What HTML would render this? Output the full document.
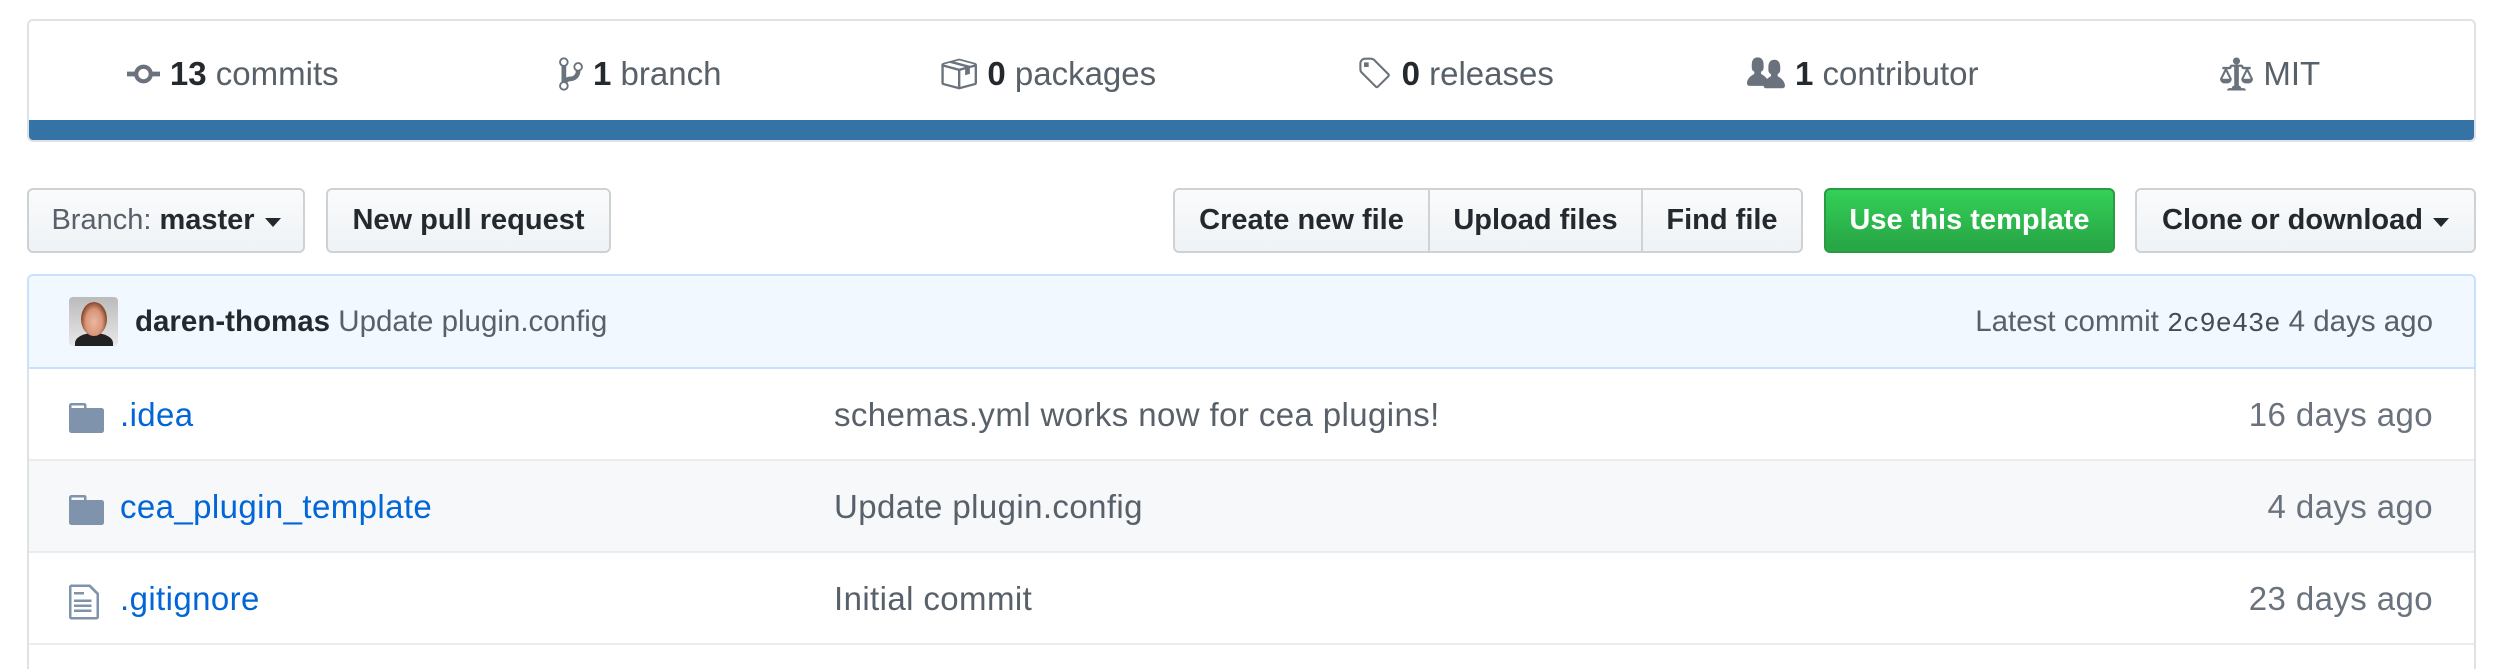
<!DOCTYPE html>
<html><head><meta charset="utf-8"><style>
*{box-sizing:border-box;margin:0;padding:0}
body{width:2493px;height:658px;background:#fff;font-family:"Liberation Sans",Arial,sans-serif;overflow:hidden;position:relative;color:#24292e}
.stats{position:absolute;left:27px;top:19px;width:2449px;height:123px;border:2px solid #dfe2e5;border-radius:6px;overflow:hidden}
.cols{display:flex;height:101px}
.col{flex:1;display:flex;align-items:center;justify-content:center;font-size:33px;color:#586069;gap:10px;padding-top:4px}
.col b{color:#24292e}
.col svg{fill:#6a737d}
.bar{position:absolute;left:0;right:0;bottom:0;height:20px;background:#3572a5}
.btn{position:absolute;top:188px;height:65px;border:2px solid #cfd2d5;border-radius:6px;background:linear-gradient(#fafbfc,#eff3f6 90%);font-size:29px;font-weight:bold;display:flex;align-items:center;justify-content:center;color:#24292e}
.caret{display:inline-block;width:0;height:0;border-left:8px solid transparent;border-right:8px solid transparent;border-top:9px solid #24292e;margin-left:10px;margin-top:3px}
.green{background:linear-gradient(#34d058,#28a745 90%);border-color:#2a9a44;color:#fff}
.tease{position:absolute;left:27px;top:274px;width:2449px;height:95px;background:#f1f8ff;border:2px solid #c8e1ff;border-radius:6px 6px 0 0;font-size:29.5px;color:#586069}
.av{position:absolute;left:40px;top:21px;width:49px;height:49px;border-radius:4px;overflow:hidden;background:linear-gradient(#bbb,#e8e8e8)}
.av i{position:absolute;left:12px;top:5px;width:26px;height:34px;border-radius:50%;background:radial-gradient(ellipse at 50% 60%,#eab7a0 0,#d8967a 45%,#8a4a2e 70%)}
.av s{position:absolute;left:6px;top:36px;width:38px;height:20px;border-radius:50% 50% 0 0;background:#222}
.tl{position:absolute;left:106px;top:29px}
.tl b{color:#24292e}
.tr{position:absolute;right:41px;top:29px}
.mono{font-family:"Liberation Mono",monospace;font-size:27px;color:#444d56}
.rows{position:absolute;left:27px;top:369px;width:2449px;height:300px;border-left:2px solid #dfe2e5;border-right:2px solid #dfe2e5}
.row{position:relative;height:92px;border-bottom:2px solid #eaecef;font-size:33px;letter-spacing:0.4px}
.row.alt{background:#f6f8fa}
.row svg{position:absolute;left:40px;top:29px;fill:#7f93ad}
.name{position:absolute;left:91px;top:27px;color:#0366d6}
.msg{position:absolute;left:805px;top:27px;color:#586069}
.age{position:absolute;right:41px;top:27px;color:#6a737d}
</style></head><body>
<div class="stats"><div class="cols">
<div class="col"><svg width="33" height="38" viewBox="0 0 14 16"><path d="M10.86 7c-.45-1.72-2-3-3.86-3-1.86 0-3.41 1.28-3.86 3H0v2h3.14c.45 1.72 2 3 3.860 3 1.86 0 3.41-1.28 3.86-3H14V7h-3.14zM7 10.2c-1.22 0-2.2-.98-2.2-2.2 0-1.22.98-2.2 2.2-2.2 1.22 0 2.2.98 2.2 2.2 0 1.22-.98 2.2-2.2 2.2z"/></svg><span><b>13</b> commits</span></div>
<div class="col"><svg width="24" height="38" viewBox="0 0 10 16"><path d="M10 5c0-1.11-.89-2-2-2a1.993 1.993 0 00-1 3.72v.3c-.02.52-.23.98-.63 1.38-.4.4-.86.61-1.38.63-.83.02-1.48.16-2 .45V4.72a1.993 1.993 0 00-1-3.720C.88 1 0 1.890 0 3a2 2 0 001 1.72v6.56c-.59.35-1 .99-1 1.72 0 1.11.89 2 2 2 1.110 0 2-.89 2-2 0-.53-.2-1-.53-1.36.09-.06.48-.41.59-.47.25-.11.56-.17.94-.17 1.05-.05 1.95-.45 2.75-1.25S8.95 7.77 9 6.73h-.02C9.59 6.37 10 5.73 10 5zM2 1.8c.66 0 1.2.55 1.2 1.2 0 .65-.55 1.2-1.2 1.2C1.35 4.2.8 3.65.8 3c0-.65.55-1.2 1.2-1.2zm0 12.41c-.66 0-1.2-.55-1.2-1.2 0-.65.55-1.2 1.2-1.2.65 0 1.2.55 1.2 1.2 0 .65-.55 1.2-1.2 1.2zm6-8c-.66 0-1.2-.55-1.2-1.2 0-.65.55-1.2 1.2-1.2.65 0 1.2.55 1.2 1.2 0 .65-.55 1.2-1.2 1.2z"/></svg><span><b>1</b> branch</span></div>
<div class="col"><svg width="38" height="38" viewBox="0 0 16 16"><path d="M1 4.27v7.47c0 .45.3.84.75.97l6.5 1.73c.16.05.34.05.5 0l6.5-1.73c.45-.13.75-.52.75-.97V4.27c0-.45-.3-.84-.75-.97l-6.5-1.73c-.16-.05-.34-.05-.5 0L1.75 3.3c-.45.13-.75.52-.75.97zm7 9.09l-6-1.59V5l6 1.61v6.75zM2 4l2.5-.67L11 5.06l-2.5.67L2 4zm13 7.77l-6 1.59V6.61l2-.55V8.5l2-.53V5.53L15 5v6.77zm-2-7.24L6.5 2.8l2-.53L15 4l-2 .53z"/></svg><span><b>0</b> packages</span></div>
<div class="col"><svg width="35" height="38" viewBox="0 0 15 16"><path d="M7.73 1.73C7.26 1.26 6.62 1 5.96 1H3.5C2.13 1 1 2.13 1 3.5v2.47c0 .66.27 1.3.73 1.77l6.06 6.06c.39.39 1.02.39 1.41 0l4.59-4.59a.996.996 0 000-1.41L7.73 1.730zM2.38 7.09c-.31-.3-.47-.7-.47-1.13V3.5c0-.88.72-1.59 1.59-1.59h2.47c.42 0 .83.16 1.13.47l6.14 6.13-4.73 4.73-6.13-6.15zM3.01 3h2v2H3V3h.01z"/></svg><span><b>0</b> releases</span></div>
<div class="col"><svg width="38" height="38" viewBox="0 0 16 16"><path d="M16 12.999c0 .439-.45 1-1 1H7.995c-.539 0-.994-.447-.995-.999H1c-.54 0-1-.561-1-1 0-2.634 3-4 3-4s.229-.409 0-1c-.841-.621-1.058-.59-1-3 .058-2.419 1.367-3 2.5-3s2.442.58 2.5 3c.058 2.41-.159 2.379-1 3-.229.59 0 1 0 1s1.549.711 2.420 2.088C9.196 9.369 10 8.999 10 8.999s.229-.409 0-1c-.841-.62-1.058-.59-1-3 .058-2.419 1.367-3 2.5-3s2.437.581 2.495 3c.059 2.41-.158 2.38-1 3-.229.59 0 1 0 1s3.005 1.366 3.005 4z"/></svg><span><b>1</b> contributor</span></div>
<div class="col"><svg width="33" height="38" viewBox="0 0 14 16"><path d="M7 4c-.83 0-1.5-.67-1.5-1.5S6.17 1 7 1s1.5.67 1.5 1.5S7.83 4 7 4zm7 6c0 1.11-.89 2-2 2h-1c-1.11 0-2-.89-2-2l2-4h-1c-.55 0-1-.45-1-1H8v8c.42 0 1 .45 1 1h1c.42 0 1 .45 1 1H3c0-.55.58-1 1-1h1c0-.55.58-1 1-1h.03L6 5H5c0 .55-.45 1-1 1H3l2 4c0 1.11-.89 2-2 2H2c-1.11 0-2-.89-2-2l2-4H1V5h3c0-.55.45-1 1-1h4c.55 0 1 .45 1 1h3v1h-1l2 4zM2.5 7L1 10h3L2.5 7zM13 10l-1.5-3-1.5 3h3z"/></svg><span>MIT</span></div>
</div><div class="bar"></div></div>

<div class="btn" style="left:27px;width:278px"><span style="font-weight:normal;color:#586069">Branch:&nbsp;</span>master<span class="caret"></span></div>
<div class="btn" style="left:326px;width:285px">New pull request</div>
<div class="btn" style="left:1173px;width:257px;border-radius:6px 0 0 6px">Create new file</div>
<div class="btn" style="left:1428px;width:215px;border-radius:0">Upload files</div>
<div class="btn" style="left:1641px;width:162px;border-radius:0 6px 6px 0">Find file</div>
<div class="btn green" style="left:1824px;width:291px">Use this template</div>
<div class="btn" style="left:2135px;width:341px">Clone or download<span class="caret"></span></div>

<div class="tease"><div class="av"><s></s><i></i></div>
<div class="tl"><b>daren-thomas</b> Update plugin.config</div>
<div class="tr">Latest commit <span class="mono">2c9e43e</span> 4 days ago</div></div>

<div class="rows">
<div class="row"><svg width="35" height="40" viewBox="0 0 14 16"><path d="M13 4H7V3c0-.66-.31-1-1-1H1c-.55 0-1 .45-1 1v10c0 .55.45 1 1 1h12c.55 0 1-.45 1-1V5c0-.55-.45-1-1-1zM6 4H1V3h5v1z"/></svg><span class="name">.idea</span><span class="msg">schemas.yml works now for cea plugins!</span><span class="age">16 days ago</span></div>
<div class="row alt"><svg width="35" height="40" viewBox="0 0 14 16"><path d="M13 4H7V3c0-.66-.31-1-1-1H1c-.55 0-1 .45-1 1v10c0 .55.45 1 1 1h12c.55 0 1-.45 1-1V5c0-.55-.45-1-1-1zM6 4H1V3h5v1z"/></svg><span class="name">cea_plugin_template</span><span class="msg">Update plugin.config</span><span class="age">4 days ago</span></div>
<div class="row"><svg width="30" height="40" viewBox="0 0 12 16"><path d="M6 5H2V4h4v1zM2 8h7V7H2v1zm0 2h7V9H2v1zm0 2h7v-1H2v1zm10-7.5V14c0 .55-.45 1-1 1H1c-.55 0-1-.45-1-1V2c0-.55.45-1 1-1h7.5L12 4.5zM11 5L8 2H1v12h10V5z"/></svg><span class="name">.gitignore</span><span class="msg">Initial commit</span><span class="age">23 days ago</span></div>
</div>
</body></html>
